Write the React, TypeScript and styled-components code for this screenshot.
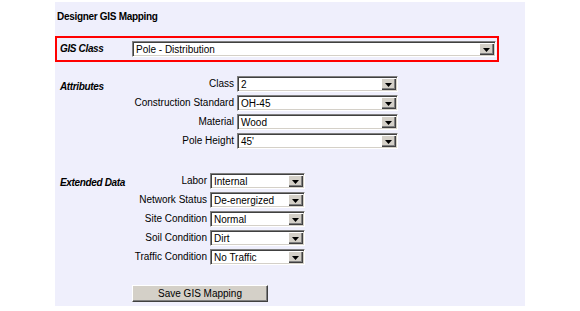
import React from "react";
import styled, { createGlobalStyle } from "styled-components";

const GlobalStyle = createGlobalStyle`
  html, body { margin: 0; padding: 0; background: #ffffff; }
  body {
    font-family: "Liberation Sans", Arial, sans-serif;
    font-size: 10px;
    color: #000000;
  }
`;

const Panel = styled.div`
  box-sizing: border-box;
  width: 470px;
  height: 304px;
  margin: 2px 0 0 55px;
  padding-top: 9px;
  background: #efeffc;
  display: flex;
  flex-direction: column;
`;

const Title = styled.div`
  font-weight: bold;
  font-size: 10px;
  letter-spacing: -0.3px;
  line-height: 12px;
  padding-left: 2px;
`;

const HighlightRow = styled.div`
  box-sizing: border-box;
  margin-top: 13px;
  width: 444px;
  border: 2px solid #ff0000;
  padding: 3px 1px 3px 0;
  display: grid;
  grid-template-columns: 75px 1fr;
  align-items: center;
`;

const SectionLabel = styled.div<{ $indent: number; $top?: number }>`
  font-weight: bold;
  font-style: italic;
  font-size: 10px;
  letter-spacing: -0.35px;
  line-height: 12px;
  padding-left: ${(p) => p.$indent}px;
  padding-top: ${(p) => p.$top ?? 0}px;
`;

const Section = styled.div<{ $top: number }>`
  margin-top: ${(p) => p.$top}px;
  display: grid;
  grid-template-columns: 77px auto;
  align-items: start;
`;

const FieldGrid = styled.div<{ $label: number; $select: number }>`
  display: grid;
  grid-template-columns: ${(p) => p.$label}px ${(p) => p.$select}px;
  column-gap: 3px;
  row-gap: 3px;
  align-items: center;
`;

const FieldLabel = styled.div`
  text-align: right;
  line-height: 16px;
  white-space: nowrap;
`;

const SelectBox = styled.div<{ $width?: number }>`
  box-sizing: border-box;
  height: 16px;
  width: ${(p) => (p.$width ? `${p.$width}px` : "100%")};
  background: #ffffff;
  border: 1px solid;
  border-color: #808080 #ffffff #ffffff #808080;
  box-shadow: inset 1px 1px 0 #404040, inset -1px -1px 0 #d4d0c8;
  padding: 1px;
  display: flex;
  align-items: stretch;
`;

const SelectValue = styled.span`
  flex: 1;
  padding-left: 2px;
  line-height: 13px;
  white-space: nowrap;
  overflow: hidden;
`;

const ArrowButton = styled.span`
  box-sizing: border-box;
  width: 15px;
  height: 12px;
  background: #d4d0c8;
  box-shadow: inset 1px 1px 0 #ffffff, inset -1px -1px 0 #404040,
    inset -2px -2px 0 #808080;
  display: flex;
  align-items: center;
  justify-content: center;
  padding-top: 1px;
`;

const ButtonRow = styled.div`
  margin-top: 20px;
  padding-left: 77px;
`;

const PushButton = styled.button`
  box-sizing: border-box;
  width: 136px;
  height: 17px;
  padding: 0;
  margin: 0;
  font-family: "Liberation Sans", Arial, sans-serif;
  font-size: 10px;
  color: #000000;
  background: #d4d0c8;
  border: 1px solid;
  border-color: #ffffff #404040 #404040 #ffffff;
  box-shadow: inset -1px -1px 0 #808080;
  cursor: pointer;
`;

const Arrow = () => (
  <svg width="7" height="4" viewBox="0 0 7 4" aria-hidden="true">
    <polygon points="0,0 7,0 3.5,4" fill="#000000" />
  </svg>
);

const Select = ({ value, width }: { value: string; width?: number }) => (
  <SelectBox $width={width}>
    <SelectValue>{value}</SelectValue>
    <ArrowButton>
      <Arrow />
    </ArrowButton>
  </SelectBox>
);

const attributes = [
  ["Class", "2"],
  ["Construction Standard", "OH-45"],
  ["Material", "Wood"],
  ["Pole Height", "45'"],
];

const extended = [
  ["Labor", "Internal"],
  ["Network Status", "De-energized"],
  ["Site Condition", "Normal"],
  ["Soil Condition", "Dirt"],
  ["Traffic Condition", "No Traffic"],
];

export default function App() {
  return (
    <>
      <GlobalStyle />
      <Panel>
        <Title>Designer GIS Mapping</Title>
        <HighlightRow>
          <SectionLabel $indent={3}>GIS Class</SectionLabel>
          <Select value="Pole - Distribution" />
        </HighlightRow>

        <Section $top={14}>
          <SectionLabel $indent={5} $top={5}>
            Attributes
          </SectionLabel>
          <FieldGrid $label={102} $select={161}>
            {attributes.map(([label, value]) => (
              <React.Fragment key={label}>
                <FieldLabel>{label}</FieldLabel>
                <Select value={value} />
              </React.Fragment>
            ))}
          </FieldGrid>
        </Section>

        <Section $top={24}>
          <SectionLabel $indent={5} $top={4}>
            Extended Data
          </SectionLabel>
          <FieldGrid $label={75} $select={95}>
            {extended.map(([label, value]) => (
              <React.Fragment key={label}>
                <FieldLabel>{label}</FieldLabel>
                <Select value={value} />
              </React.Fragment>
            ))}
          </FieldGrid>
        </Section>

        <ButtonRow>
          <PushButton type="button">Save GIS Mapping</PushButton>
        </ButtonRow>
      </Panel>
    </>
  );
}
